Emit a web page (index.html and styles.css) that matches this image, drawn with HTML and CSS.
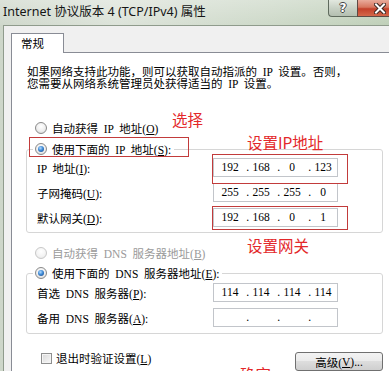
FILE: index.html
```html
<!DOCTYPE html>
<html lang="zh-CN">
<head>
<meta charset="utf-8">
<title>Internet 协议版本 4 (TCP/IPv4) 属性</title>
<link rel="stylesheet" href="styles.css">
</head>
<body>
<div class="window">
  <div class="titlebar">
    <div class="title">Internet 协议版本 4 (TCP/IPv4) 属性</div>
    <div class="caption-btns">
      <div class="cbtn help">?</div>
      <div class="cbtn close">
        <svg width="12" height="11" viewBox="0 0 12 11" aria-hidden="true">
          <path d="M2 1.5 L10 9.5 M10 1.5 L2 9.5" stroke="#3a2520" stroke-width="4" stroke-linecap="square"/>
          <path d="M2 1.5 L10 9.5 M10 1.5 L2 9.5" stroke="#ffffff" stroke-width="2" stroke-linecap="square"/>
        </svg>
      </div>
    </div>
  </div>
  <div class="client">
    <div class="tab">常规</div>
    <div class="panel">
      <p class="desc">如果网络支持此功能，则可以获取自动指派的 IP 设置。否则，<br>您需要从网络系统管理员处获得适当的 IP 设置。</p>

      <div class="radio-row first-radio"><span class="radio"></span><span>自动获得 IP 地址(<u>O</u>)</span></div>

      <fieldset class="group ip-group">
        <legend><span class="radio on"></span><span>使用下面的 IP 地址(<u>S</u>):</span></legend>
        <div class="field-row first"><span class="lbl">IP 地址(<u>I</u>):</span>
          <div class="ipbox"><span>192</span><span class="dot">.</span><span>168</span><span class="dot">.</span><span>0</span><span class="dot">.</span><span>123</span></div>
        </div>
        <div class="field-row"><span class="lbl">子网掩码(<u>U</u>):</span>
          <div class="ipbox"><span>255</span><span class="dot">.</span><span>255</span><span class="dot">.</span><span>255</span><span class="dot">.</span><span>0</span></div>
        </div>
        <div class="field-row"><span class="lbl">默认网关(<u>D</u>):</span>
          <div class="ipbox"><span>192</span><span class="dot">.</span><span>168</span><span class="dot">.</span><span>0</span><span class="dot">.</span><span>1</span></div>
        </div>
      </fieldset>

      <div class="radio-row dns-radio disabled"><span class="radio off"></span><span>自动获得 DNS 服务器地址(<u>B</u>)</span></div>

      <fieldset class="group dns-group">
        <legend><span class="radio on"></span><span>使用下面的 DNS 服务器地址(<u>E</u>):</span></legend>
        <div class="field-row first-dns"><span class="lbl">首选 DNS 服务器(<u>P</u>):</span>
          <div class="ipbox"><span>114</span><span class="dot">.</span><span>114</span><span class="dot">.</span><span>114</span><span class="dot">.</span><span>114</span></div>
        </div>
        <div class="field-row"><span class="lbl">备用 DNS 服务器(<u>A</u>):</span>
          <div class="ipbox"><span></span><span class="dot">.</span><span></span><span class="dot">.</span><span></span><span class="dot">.</span><span></span></div>
        </div>
      </fieldset>

      <div class="bottom-row">
        <div class="chk-wrap"><span class="checkbox"></span><span>退出时验证设置(<u>L</u>)</span></div>
        <div class="btn">高级(<u>V</u>)...</div>
      </div>
    </div>
  </div>

  <div class="note n-select">选择</div>
  <div class="note n-ip">设置IP地址</div>
  <div class="note n-gw">设置网关</div>
  <div class="note n-ok">确定</div>
  <div class="mark m-radio"></div>
  <div class="mark m-ip"></div>
  <div class="mark m-gw"></div>
</div>
</body>
</html>
```
FILE: styles.css
```css
html, body {
  margin: 0;
  padding: 0;
}
body {
  width: 389px;
  height: 371px;
  overflow: hidden;
  background: #f0f0f0;
}
.window {
  position: relative;
  width: 389px;
  height: 371px;
  overflow: hidden;
  display: flex;
  flex-direction: column;
  background: linear-gradient(90deg, #cdd6c9 0%, #dbe2d8 30%, #cbd7c6 70%, #bccdb5 100%);
  font-family: "Liberation Serif", "Noto Sans CJK SC", serif;
  font-size: 11.5px;
  color: #000;
}

/* title bar */
.titlebar {
  height: 25px;
  flex: none;
  display: flex;
  align-items: flex-start;
  background: linear-gradient(180deg, rgba(255,255,255,0.30), rgba(255,255,255,0.05));
}
.title {
  font-family: "Noto Sans", "Noto Sans CJK SC", sans-serif;
  font-size: 12.5px;
  line-height: 16px;
  padding: 4px 0 0 3px;
  color: #151515;
  white-space: nowrap;
}
.caption-btns {
  display: flex;
  margin-left: auto;
  margin-right: -13px;
}
.cbtn {
  height: 17px;
  box-sizing: border-box;
  display: flex;
  align-items: center;
  justify-content: center;
}
.help {
  width: 29px;
  border: 1px solid #5f6b5e;
  border-top: none;
  border-right: none;
  border-radius: 0 0 0 4px;
  background: linear-gradient(#e2e8df, #c8d1c5 50%, #b4bfb1);
  font-family: "DejaVu Sans", sans-serif;
  font-weight: bold;
  font-size: 12px;
  color: #fff;
  text-shadow: 1px 0 0 #444, -1px 0 0 #444, 0 1px 0 #444, 0 -1px 0 #444;
}
.close {
  width: 45px;
  border: 1px solid #5f4a44;
  border-top: none;
  border-radius: 0 0 4px 0;
  background: linear-gradient(#e9ab9b, #d7765f 45%, #c3402a 55%, #d4684a);
}

/* client area */
.client {
  flex: 1;
  min-height: 0;
  margin-left: 3px;
  border-left: 1px solid #8f9b8c;
  border-top: 1px solid #8f9b8c;
  background: #f0f0f0;
  padding: 7px 0 0 7px;
  display: flex;
  flex-direction: column;
}
.tab {
  flex: none;
  width: 53px;
  height: 20px;
  box-sizing: border-box;
  border: 1px solid #898c95;
  border-bottom: none;
  background: #fff;
  margin-bottom: -1px;
  position: relative;
  z-index: 1;
  font-family: "Noto Sans CJK SC", sans-serif;
  font-size: 11.5px;
  line-height: 18px;
  padding-left: 9px;
}
.panel {
  flex: 1;
  border-top: 1px solid #898c95;
  border-left: 1px solid #898c95;
  background: #fff;
  padding: 13px 0 0 14px;
}
.desc {
  margin: 0 0 0 1px;
  line-height: 12px;
  height: 24px;
  white-space: nowrap;
  word-spacing: 2.9px;
}

/* radios */
.radio-row {
  height: 14px;
  display: flex;
  align-items: center;
  padding-left: 9px;
  white-space: nowrap;
  word-spacing: 2.9px;
}
.first-radio { margin-top: 31px; }
.dns-radio { margin-top: 13px; }
.disabled { color: #9a9a9a; }
.radio {
  flex: none;
  position: relative;
  width: 12px;
  height: 12px;
  box-sizing: border-box;
  border-radius: 50%;
  border: 1px solid #8a8a8a;
  background: radial-gradient(circle at 50% 35%, #ffffff 0%, #eeeeee 55%, #d0d0d0 100%);
  margin-right: 5px;
}
.radio.on::after {
  content: "";
  position: absolute;
  left: 2px;
  top: 2px;
  width: 6px;
  height: 6px;
  border-radius: 50%;
  background: radial-gradient(circle at 40% 35%, #b3dcff 0%, #3f8ad6 45%, #153f7c 100%);
}
.radio.off {
  border-color: #c8c8c8;
  background: radial-gradient(circle at 50% 35%, #ffffff 0%, #f3f3f3 60%, #e2e2e2 100%);
}

/* group boxes */
.group {
  width: 357px;
  min-width: 0;
  box-sizing: border-box;
  margin: 0;
  border: 1px solid #d6d6d6;
  border-radius: 3px;
}
.ip-group { margin-top: 7px; padding: 0 0 5px 0; }
.dns-group { margin-top: 6px; padding: 0 0 6px 0; }
legend {
  margin-left: 6px;
  padding: 0 3px 0 2px;
  height: 14px;
  display: flex;
  align-items: center;
  white-space: nowrap;
  word-spacing: 2.9px;
}
.field-row {
  display: flex;
  align-items: center;
  height: 19px;
  margin-top: 6px;
  padding-left: 10px;
  white-space: nowrap;
  word-spacing: 2.9px;
}
.field-row.first { margin-top: 2px; }
.field-row.first-dns { margin-top: 3px; }
.lbl {
  flex: none;
  width: 176px;
}
.ipbox {
  flex: none;
  width: 125px;
  height: 19px;
  box-sizing: border-box;
  border: 1px solid #c2c5ca;
  background: #fff;
  padding-left: 4px;
  display: grid;
  grid-template-columns: 24px 7px 24px 7px 24px 7px 24px;
  align-items: center;
  line-height: 17px;
  word-spacing: 0;
}
.ipbox span { text-align: center; }
.ipbox .dot { text-align: right; }

/* bottom row */
.bottom-row {
  width: 357px;
  height: 19px;
  margin-top: 18px;
  display: flex;
  align-items: flex-start;
}
.chk-wrap {
  display: flex;
  align-items: center;
  height: 12px;
  white-space: nowrap;
}
.checkbox {
  flex: none;
  width: 11px;
  height: 11px;
  box-sizing: border-box;
  border: 1px solid #8e8f8f;
  background: linear-gradient(135deg, #d8d8d8, #f8f8f8);
  box-shadow: inset 0 0 0 1px #f4f4f4;
  margin-left: 15px;
  margin-right: 4px;
}
.btn {
  margin-left: auto;
  width: 88px;
  height: 19px;
  box-sizing: border-box;
  border: 1px solid #707070;
  border-radius: 3px;
  background: linear-gradient(#f3f3f3, #ebebeb 45%, #dddddd 50%, #cfcfcf);
  display: flex;
  align-items: center;
  justify-content: center;
  white-space: nowrap;
}

/* red annotations over the dialog */
.note {
  position: absolute;
  color: #e3282a;
  font-family: "Noto Sans CJK SC", sans-serif;
  font-size: 15.5px;
  line-height: 16px;
  white-space: nowrap;
}
.n-select { left: 172px; top: 111px; }
.n-ip { left: 247px; top: 134px; }
.n-gw { left: 247px; top: 237px; }
.n-ok { left: 240px; top: 366px; }
.mark {
  position: absolute;
  box-sizing: border-box;
  border: 1px solid #c23b3b;
}
.m-radio { left: 29px; top: 137px; width: 160px; height: 20px; }
.m-ip { left: 212px; top: 154px; width: 136px; height: 30px; }
.m-gw { left: 212px; top: 206px; width: 136px; height: 24px; }
```
